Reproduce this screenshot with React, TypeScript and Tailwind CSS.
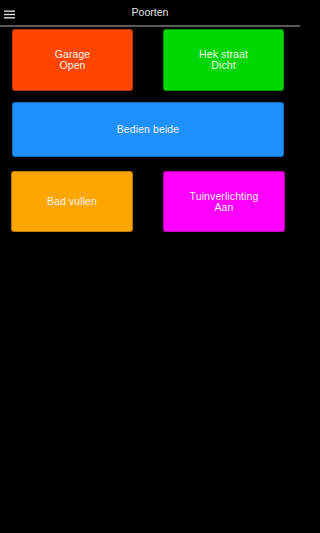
import React from "react";

function Tile({
  lines,
  className,
}: {
  lines: string[];
  className: string;
}) {
  return (
    <button
      className={`flex flex-col items-center justify-center rounded-[3px] border border-black/25 text-[10.5px] leading-[11px] tracking-[0.1px] text-[#f4f4f4] ${className}`}
    >
      {lines.map((line, i) => (
        <span key={i}>{line}</span>
      ))}
    </button>
  );
}

function MenuIcon() {
  return (
    <svg width="11" height="9" viewBox="0 0 11 9" className="text-[#dcdcdc]">
      <rect x="0" y="0.5" width="11" height="1.4" fill="currentColor" />
      <rect x="0" y="3.8" width="11" height="1.4" fill="currentColor" />
      <rect x="0" y="7.1" width="11" height="1.4" fill="currentColor" />
    </svg>
  );
}

export default function App() {
  return (
    <div
      className="w-full min-h-[533px] bg-black overflow-hidden"
      style={{ fontFamily: '"Liberation Sans", Arial, sans-serif' }}
    >
      <div className="w-[300px]">
        <div className="relative flex items-center justify-center h-[27px] border-b-2 border-[#5a5a5a]">
          <div className="absolute left-[4px] top-[10px]">
            <MenuIcon />
          </div>
          <span className="text-[10.5px] text-[#e6e6e6] pt-[1px]">
            Poorten
          </span>
        </div>

        <div className="flex flex-col pt-[2px]">
          <div className="flex gap-[30px] pl-[12px]">
            <Tile lines={["Garage", "Open"]} className="w-[121px] h-[62px] bg-[#ff4500]" />
            <Tile lines={["Hek straat", "Dicht"]} className="w-[121px] h-[62px] bg-[#00d600]" />
          </div>

          <div className="flex pl-[12px] mt-[11px]">
            <Tile lines={["Bedien beide"]} className="w-[272px] h-[55px] bg-[#1e90ff]" />
          </div>

          <div className="flex gap-[30px] pl-[11px] mt-[14px]">
            <Tile lines={["Bad vullen"]} className="w-[122px] h-[61px] bg-[#ffa500]" />
            <Tile lines={["Tuinverlichting", "Aan"]} className="w-[122px] h-[61px] bg-[#ff00ff]" />
          </div>
        </div>
      </div>
    </div>
  );
}
